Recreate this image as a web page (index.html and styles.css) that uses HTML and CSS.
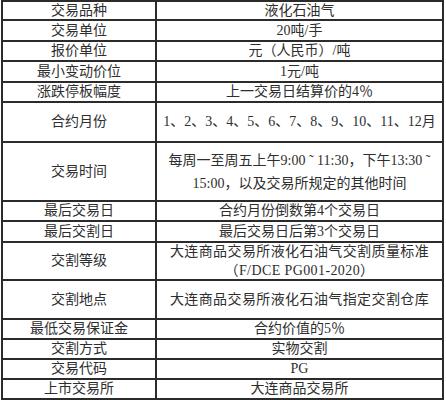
FILE: index.html
```html
<!DOCTYPE html>
<html lang="zh-CN">
<head>
<meta charset="utf-8">
<link rel="stylesheet" href="styles.css">
</head>
<body>
<div class="sheet">
  <div class="row h19"><div class="k">交易品种</div><div class="v">液化石油气</div></div>
  <div class="row h21"><div class="k">交易单位</div><div class="v">20吨/手</div></div>
  <div class="row h20"><div class="k">报价单位</div><div class="v">元（人民币）/吨</div></div>
  <div class="row h21"><div class="k">最小变动价位</div><div class="v">1元/吨</div></div>
  <div class="row h20"><div class="k">涨跌停板幅度</div><div class="v">上一交易日结算价的4％</div></div>
  <div class="row h40"><div class="k">合约月份</div><div class="v">1、2、3、4、5、6、7、8、9、10、11、12月</div></div>
  <div class="row h59"><div class="k">交易时间</div><div class="v lh23">每周一至周五上午9:00 ˜ 11:30，下午13:30 ˜<br>15:00，以及交易所规定的其他时间</div></div>
  <div class="row h20"><div class="k">最后交易日</div><div class="v">合约月份倒数第4个交易日</div></div>
  <div class="row h21"><div class="k">最后交割日</div><div class="v">最后交易日后第3个交易日</div></div>
  <div class="row h38"><div class="k">交割等级</div><div class="v lh19 wide">大连商品交易所液化石油气交割质量标准<br>（F/DCE PG001-2020）</div></div>
  <div class="row h39"><div class="k">交割地点</div><div class="v wide">大连商品交易所液化石油气指定交割仓库</div></div>
  <div class="row h20"><div class="k">最低交易保证金</div><div class="v">合约价值的5％</div></div>
  <div class="row h20"><div class="k">交割方式</div><div class="v">实物交割</div></div>
  <div class="row h20"><div class="k">交易代码</div><div class="v">PG</div></div>
  <div class="row h20"><div class="k">上市交易所</div><div class="v">大连商品交易所</div></div>
</div>
</body>
</html>
```

FILE: styles.css
```css
* { box-sizing: border-box; }
html, body { margin: 0; padding: 0; background: #fff; }
body {
  font-family: "Liberation Serif", "Noto Sans CJK SC", serif;
  font-size: 14px;
  color: #2e2e2e;
}
.sheet {
  margin: 0 0 0 1px;
  width: 443px;
  border-top: 2px solid #2b2b2b;
  border-left: 2px solid #2b2b2b;
  border-right: 2px solid #2b2b2b;
}
.row {
  display: flex;
  border-bottom: 2px solid #2b2b2b;
}
.k {
  width: 154px;
  flex: none;
  border-right: 2px solid #2b2b2b;
  display: flex;
  align-items: center;
  justify-content: center;
  line-height: 16px;
}
.v {
  flex: 1;
  display: flex;
  align-items: center;
  justify-content: center;
  text-align: center;
  line-height: 16px;
  white-space: nowrap;
}
.wide { letter-spacing: 0.4px; }
.lh23 { line-height: 23px; }
.lh19 { line-height: 19px; }
.h19 { height: 19px; }
.h20 { height: 20px; }
.h21 { height: 21px; }
.h38 { height: 38px; }
.h39 { height: 39px; }
.h40 { height: 40px; }
.h59 { height: 59px; }
```
